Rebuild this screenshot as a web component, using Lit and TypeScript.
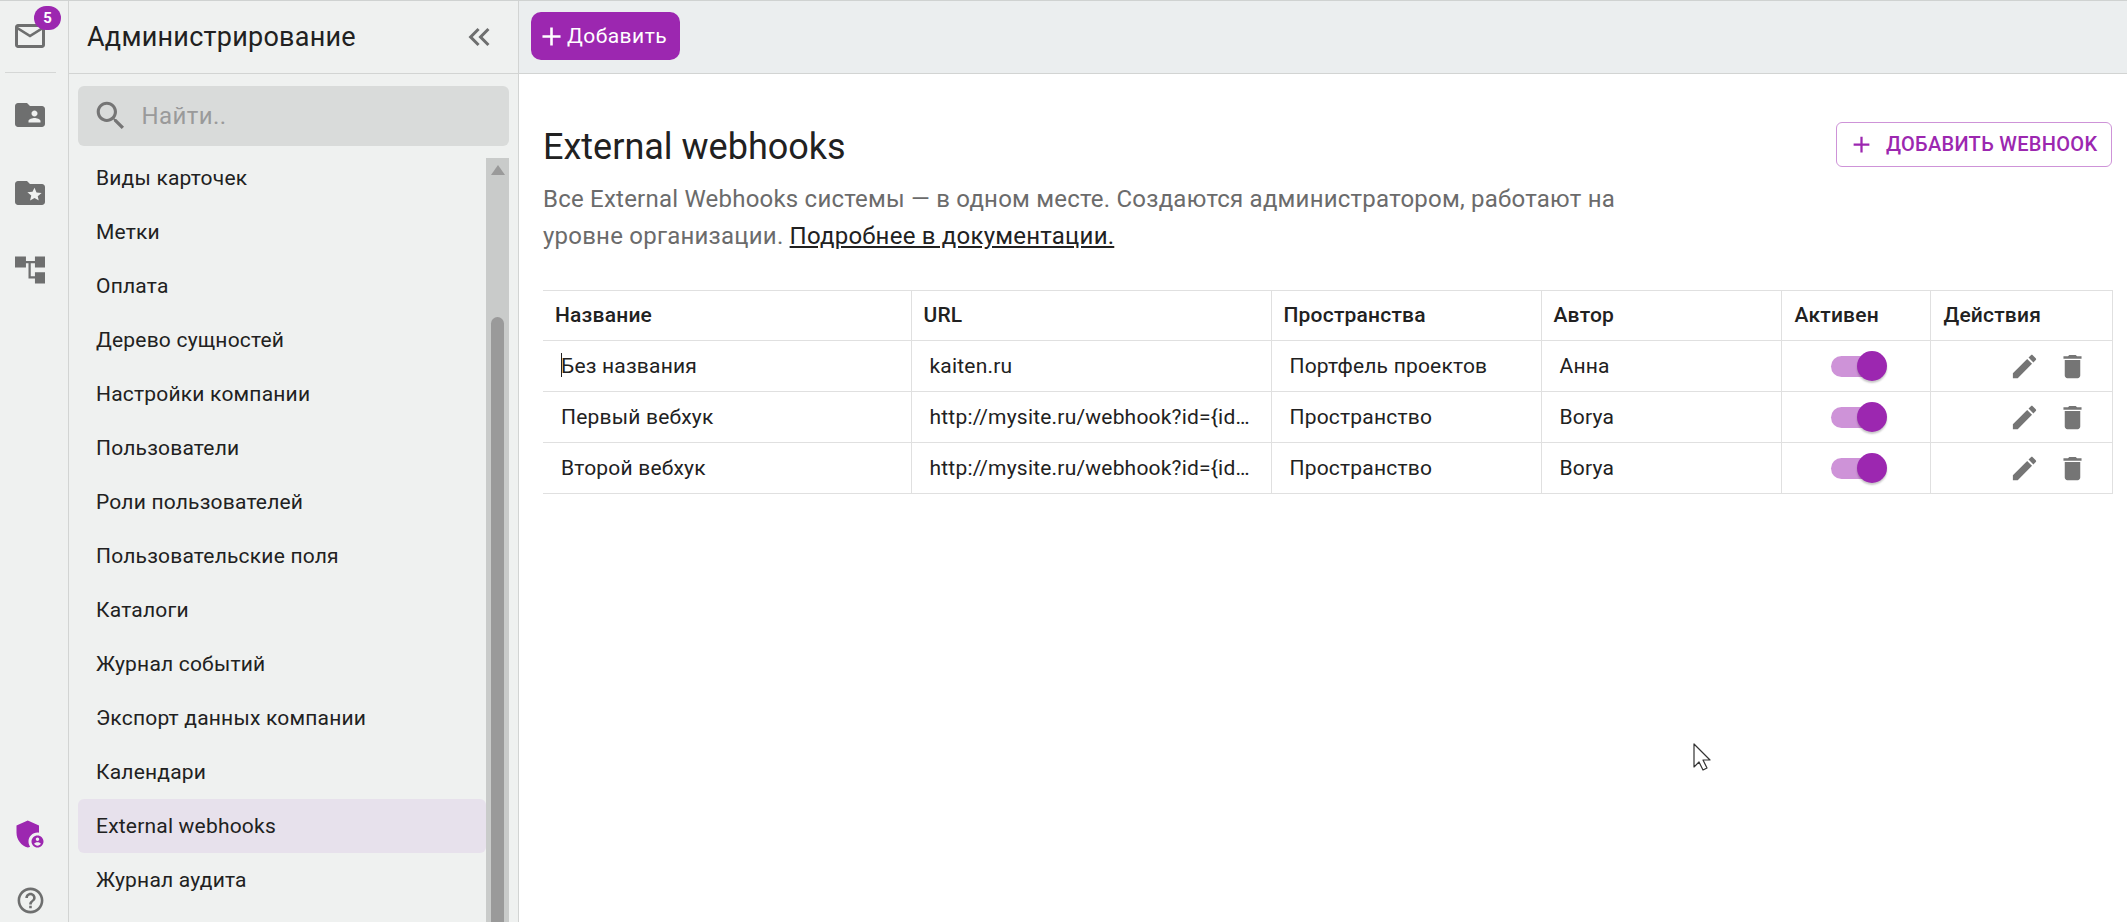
import { LitElement, html, css, svg } from 'lit';
import { customElement } from 'lit/decorators.js';

const icon = (d: string, size: string) =>
  html`<svg class="icon ${size}" viewBox="0 0 24 24"><path d=${d}></path></svg>`;

const ICONS = {
  mail: 'M20 4H4c-1.1 0-1.99.9-1.99 2L2 18c0 1.1.9 2 2 2h16c1.1 0 2-.9 2-2V6c0-1.1-.9-2-2-2zm0 14H4V8l8 5 8-5v10zm-8-7L4 6h16l-8 5z',
  folderShared: 'M20 6h-8l-2-2H4c-1.1 0-1.99.9-1.99 2L2 18c0 1.1.9 2 2 2h16c1.1 0 2-.9 2-2V8c0-1.1-.9-2-2-2zm-5 3c1.1 0 2 .9 2 2s-.9 2-2 2-2-.9-2-2 .9-2 2-2zm4 8h-8v-1c0-1.33 2.67-2 4-2s4 .67 4 2v1z',
  folderStar: 'M20 6h-8l-2-2H4c-1.1 0-1.99.9-1.99 2L2 18c0 1.1.9 2 2 2h16c1.1 0 2-.9 2-2V8c0-1.1-.9-2-2-2zm-2.06 11L15 15.28 12.06 17l.78-3.33-2.59-2.24 3.41-.29L15 8.5l1.34 3.14 3.41.29-2.59 2.24.78 3.33z',
  tree: 'M2 3h7.3v3h6V3H22v7.3h-6.7V7.5h-2.8v8.7h2.8v-2.7H22V21h-6.7v-3.3H11V7.5H9.3v2.8H2z',
  admin: 'M17 11c.34 0 .67.04 1 .09V6.27L10.5 3 3 6.27v4.91c0 4.54 3.2 8.79 7.5 9.82.55-.13 1.08-.32 1.6-.55-.69-.98-1.1-2.17-1.1-3.45 0-3.31 2.69-6 6-6zm0 2c-2.21 0-4 1.79-4 4s1.79 4 4 4 4-1.79 4-4-1.79-4-4-4zm0 1.38c.62 0 1.12.51 1.12 1.12s-.51 1.12-1.12 1.12-1.12-.51-1.12-1.12.5-1.12 1.12-1.12zm0 5.37c-.93 0-1.74-.46-2.24-1.17.05-.72 1.51-1.08 2.24-1.08s2.19.36 2.24 1.08c-.5.71-1.31 1.17-2.24 1.17z',
  help: 'M11 18h2v-2h-2v2zm1-16C6.48 2 2 6.48 2 12s4.48 10 10 10 10-4.48 10-10S17.52 2 12 2zm0 18c-4.41 0-8-3.59-8-8s3.59-8 8-8 8 3.59 8 8-3.59 8-8 8zm0-14c-2.21 0-4 1.79-4 4h2c0-1.1.9-2 2-2s2 .9 2 2c0 2-3 1.75-3 5h2c0-2.25 3-2.5 3-5 0-2.21-1.79-4-4-4z',
  collapse: 'M17.59 18 19 16.59 14.42 12 19 7.41 17.59 6l-6 6zM11 18l1.41-1.41L7.83 12l4.58-4.59L11 6l-6 6z',
  search: 'M15.5 14h-.79l-.28-.27C15.41 12.59 16 11.11 16 9.5 16 5.91 13.09 3 9.5 3S3 5.91 3 9.5 5.91 16 9.5 16c1.61 0 3.09-.59 4.23-1.57l.27.28v.79l5 4.99L20.49 19l-4.99-5zm-6 0C7.01 14 5 11.99 5 9.5S7.01 5 9.5 5 14 7.01 14 9.5 11.99 14 9.5 14z',
  plus: 'M19 13h-6v6h-2v-6H5v-2h6V5h2v6h6v2z',
  edit: 'M3 17.25V21h3.75L17.81 9.94l-3.75-3.75L3 17.25zM20.71 7.04c.39-.39.39-1.02 0-1.41l-2.34-2.34c-.39-.39-1.02-.39-1.41 0l-1.83 1.83 3.75 3.75 1.83-1.83z',
  trash: 'M6 19c0 1.1.9 2 2 2h8c1.1 0 2-.9 2-2V7H6v12zM19 4h-3.5l-1-1h-5l-1 1H5v2h14V4z',
};

const MENU = [
  'Виды карточек', 'Метки', 'Оплата', 'Дерево сущностей', 'Настройки компании', 'Пользователи',
  'Роли пользователей', 'Пользовательские поля', 'Каталоги', 'Журнал событий',
  'Экспорт данных компании', 'Календари', 'External webhooks', 'Журнал аудита',
];

const HOOK_URL = 'http://mysite.ru/webhook?id={id}&t=1';
const ROWS = [
  { name: 'Без названия', url: 'kaiten.ru', space: 'Портфель проектов', author: 'Анна', caret: true },
  { name: 'Первый вебхук', url: HOOK_URL, space: 'Пространство', author: 'Borya', caret: false },
  { name: 'Второй вебхук', url: HOOK_URL, space: 'Пространство', author: 'Borya', caret: false },
];

@customElement('app-root')
export class AppRoot extends LitElement {
  static styles = css`
    :host {
      display: flex;
      height: 922px;
      overflow: hidden;
      position: relative;
      box-sizing: border-box;
      border-top: 1px solid #cfd2d1;
      background: #fff;
      font-family: Roboto, 'Noto Sans', sans-serif;
      color: #212121;
    }
    * { box-sizing: border-box; }
    .icon { display: block; flex: none; fill: currentColor; }
    .s36 { width: 36px; height: 36px; }
    .s31 { width: 31px; height: 31px; }

    .rail {
      flex: none;
      width: 69px;
      padding-right: 8px;
      display: flex;
      flex-direction: column;
      align-items: center;
      background: #eff1f0;
      border-right: 1px solid #d2d4d3;
      color: #6e6f6f;
    }
    .rail-mail { position: relative; margin-top: 17px; }
    .badge {
      position: absolute;
      left: 22px;
      top: -12px;
      width: 27px;
      height: 24px;
      border-radius: 12px;
      background: #9c27b0;
      color: #fff;
      font-size: 15px;
      font-weight: 700;
      line-height: 24px;
      text-align: center;
    }
    .rail-line { width: 51px; height: 1px; margin-top: 18px; background: #d5d7d6; }
    .rail-folder { margin-top: 24px; }
    .rail-folder + .rail-folder { margin-top: 42px; }
    .rail-tree { margin-top: 41px; }
    .rail-bottom { margin-top: auto; display: flex; flex-direction: column; align-items: center; }
    .rail-admin { color: #9c27b0; }
    .rail-help { margin: 33px 0 6px; }

    .side {
      flex: none;
      width: 450px;
      display: flex;
      flex-direction: column;
      background: #eff1f0;
      border-right: 1px solid #d2d4d3;
    }
    .side-head {
      flex: none;
      height: 73px;
      display: flex;
      align-items: center;
      justify-content: space-between;
      padding: 0 22px 0 18px;
      margin-right: -1px;
      border-bottom: 1px solid #d2d4d3;
      font-size: 27px;
      letter-spacing: 0.25px;
      color: #212121;
    }
    .side-head svg { color: #6e6f6f; }
    .search {
      flex: none;
      height: 60px;
      margin: 12px 9px 12px 9px;
      padding: 0 0 1px 14px;
      display: flex;
      align-items: center;
      gap: 12px;
      border-radius: 6px;
      background: #d9dbda;
      color: #757575;
      font-size: 24px;
      letter-spacing: 0.4px;
    }
    .search svg { width: 37.5px; height: 37.5px; }
    .search span { color: #9a9a9a; }
    .side-body { flex: 1; min-height: 0; display: flex; padding: 0 9px; }
    .menu { flex: 1; min-width: 0; overflow: hidden; }
    .menu-list { margin-top: -7px; }
    .menu-item {
      height: 54px;
      padding-left: 18px;
      display: flex;
      align-items: center;
      border-radius: 6px;
      font-size: 21px;
      letter-spacing: 0.2px;
      color: #212121;
    }
    .menu-item.on { background: #e7e1ec; }
    .scroll {
      flex: none;
      width: 23px;
      display: flex;
      flex-direction: column;
      align-items: center;
      background: #c9cbca;
    }
    .scroll-up {
      margin: 7px 0 142px;
      width: 0;
      height: 0;
      border-left: 7px solid transparent;
      border-right: 7px solid transparent;
      border-bottom: 10px solid #9a9a9a;
    }
    .scroll-thumb { flex: 1; width: 13px; border-radius: 7px 7px 0 0; background: #9a9a9a; }

    .main { flex: 1; min-width: 0; display: flex; flex-direction: column; }
    .bar {
      flex: none;
      height: 73px;
      padding: 11px 12px;
      background: #ebeeef;
      border-bottom: 1px solid #d2d4d3;
    }
    .add {
      display: inline-flex;
      align-items: center;
      width: 149px;
      height: 48px;
      padding-left: 5px;
      border-radius: 10px;
      background: #9c27b0;
      color: #fff;
      font-size: 21px;
      letter-spacing: 0.45px;
    }
    .content { flex: 1; padding: 48px 15px 0 24px; }
    .head { display: flex; justify-content: space-between; align-items: flex-start; }
    h1 { margin: 3px 0 0; font-size: 36px; font-weight: 400; line-height: 45px; color: #212121; }
    .add-hook {
      display: flex;
      align-items: center;
      gap: 11px;
      width: 276px;
      height: 45px;
      padding: 0 0 1px 11px;
      border: 1px solid #ce93d8;
      border-radius: 6px;
      color: #9c27b0;
      font-size: 20px;
      font-weight: 500;
      letter-spacing: 0.3px;
      white-space: nowrap;
    }
    .add-hook svg { width: 27px; height: 27px; }
    .lead {
      width: 1090px;
      margin: 11px 0 0;
      font-size: 24px;
      line-height: 37px;
      letter-spacing: 0.22px;
      color: #6b6b6b;
    }
    .lead a { color: #212121; text-decoration: underline; }

    table { width: 1569px; margin-top: 35px; border-collapse: collapse; table-layout: fixed; font-size: 21px; }
    .c-name { width: 368px; }
    .c-url { width: 360px; }
    .c-space { width: 270px; }
    .c-author { width: 240px; }
    .c-active { width: 149px; }
    .c-actions { width: 182px; }
    th, td { border: 1px solid #e0e0e0; padding: 0 18px; white-space: nowrap; overflow: hidden; text-overflow: ellipsis; }
    th:first-child, td:first-child { border-left: none; }
    th { height: 50px; padding: 0 12px 2px; text-align: left; font-weight: 500; letter-spacing: 0.2px; }
    th:nth-child(n + 5) { padding-left: 13px; }
    td { height: 51px; letter-spacing: 0.2px; color: #212121; }
    .name { position: relative; }
    .caret { position: absolute; left: 18px; top: 12px; width: 1px; height: 24px; background: #212121; }
    .active { padding: 0; }
    .switch { position: relative; width: 53px; height: 21px; margin-left: 49px; border-radius: 11px; background: #ce93d8; }
    .switch i {
      position: absolute;
      right: -3px;
      top: -5px;
      width: 30px;
      height: 30px;
      border-radius: 50%;
      background: #9c27b0;
      box-shadow: 0 2px 2px rgba(0, 0, 0, 0.22);
    }
    .actions { padding: 0 24px 0 0; }
    .actions div { display: flex; justify-content: flex-end; gap: 17px; color: #757575; }

    .pointer { position: absolute; left: 1692px; top: 741px; width: 20px; height: 30px; }
  `;

  render() {
    return html`
      <nav class="rail">
        <div class="rail-mail">${icon(ICONS.mail, 's36')}<span class="badge">5</span></div>
        <div class="rail-line"></div>
        <div class="rail-folder">${icon(ICONS.folderShared, 's36')}</div>
        <div class="rail-folder">${icon(ICONS.folderStar, 's36')}</div>
        <div class="rail-tree">${icon(ICONS.tree, 's36')}</div>
        <div class="rail-bottom">
          <div class="rail-admin">${icon(ICONS.admin, 's36')}</div>
          <div class="rail-help">${icon(ICONS.help, 's31')}</div>
        </div>
      </nav>

      <aside class="side">
        <div class="side-head">
          <span>Администрирование</span>
          ${icon(ICONS.collapse, 's36')}
        </div>
        <div class="search">${icon(ICONS.search, 's36')}<span>Найти..</span></div>
        <div class="side-body">
          <div class="menu">
            <div class="menu-list">
              ${MENU.map(
                (m) => html`<div class="menu-item ${m === 'External webhooks' ? 'on' : ''}">${m}</div>`
              )}
            </div>
          </div>
          <div class="scroll">
            <div class="scroll-up"></div>
            <div class="scroll-thumb"></div>
          </div>
        </div>
      </aside>

      <main class="main">
        <div class="bar">
          <div class="add">${icon(ICONS.plus, 's31')}Добавить</div>
        </div>
        <div class="content">
          <div class="head">
            <h1>External webhooks</h1>
            <div class="add-hook">${icon(ICONS.plus, 's36')}ДОБАВИТЬ WEBHOOK</div>
          </div>
          <p class="lead">
            Все External Webhooks системы — в одном месте. Создаются администратором, работают на
            уровне организации. <a>Подробнее в документации.</a>
          </p>
          <table>
            <colgroup>
              <col class="c-name" /><col class="c-url" /><col class="c-space" />
              <col class="c-author" /><col class="c-active" /><col class="c-actions" />
            </colgroup>
            <thead>
              <tr>
                <th>Название</th><th>URL</th><th>Пространства</th>
                <th>Автор</th><th>Активен</th><th>Действия</th>
              </tr>
            </thead>
            <tbody>
              ${ROWS.map(
                (r) => html`<tr>
                  <td class="name">${r.name}${r.caret ? html`<span class="caret"></span>` : ''}</td>
                  <td>${r.url}</td>
                  <td>${r.space}</td>
                  <td>${r.author}</td>
                  <td class="active"><div class="switch"><i></i></div></td>
                  <td class="actions"><div>${icon(ICONS.edit, 's31')}${icon(ICONS.trash, 's31')}</div></td>
                </tr>`
              )}
            </tbody>
          </table>
        </div>
      </main>

      <svg class="pointer" viewBox="0 0 20 30">
        ${svg`<path d="M2 2v23l5-5 4 8 4-2-4-8h7z" fill="#fff" stroke="#333" stroke-width="1.2" stroke-linejoin="round"></path>`}
      </svg>
    `;
  }
}
